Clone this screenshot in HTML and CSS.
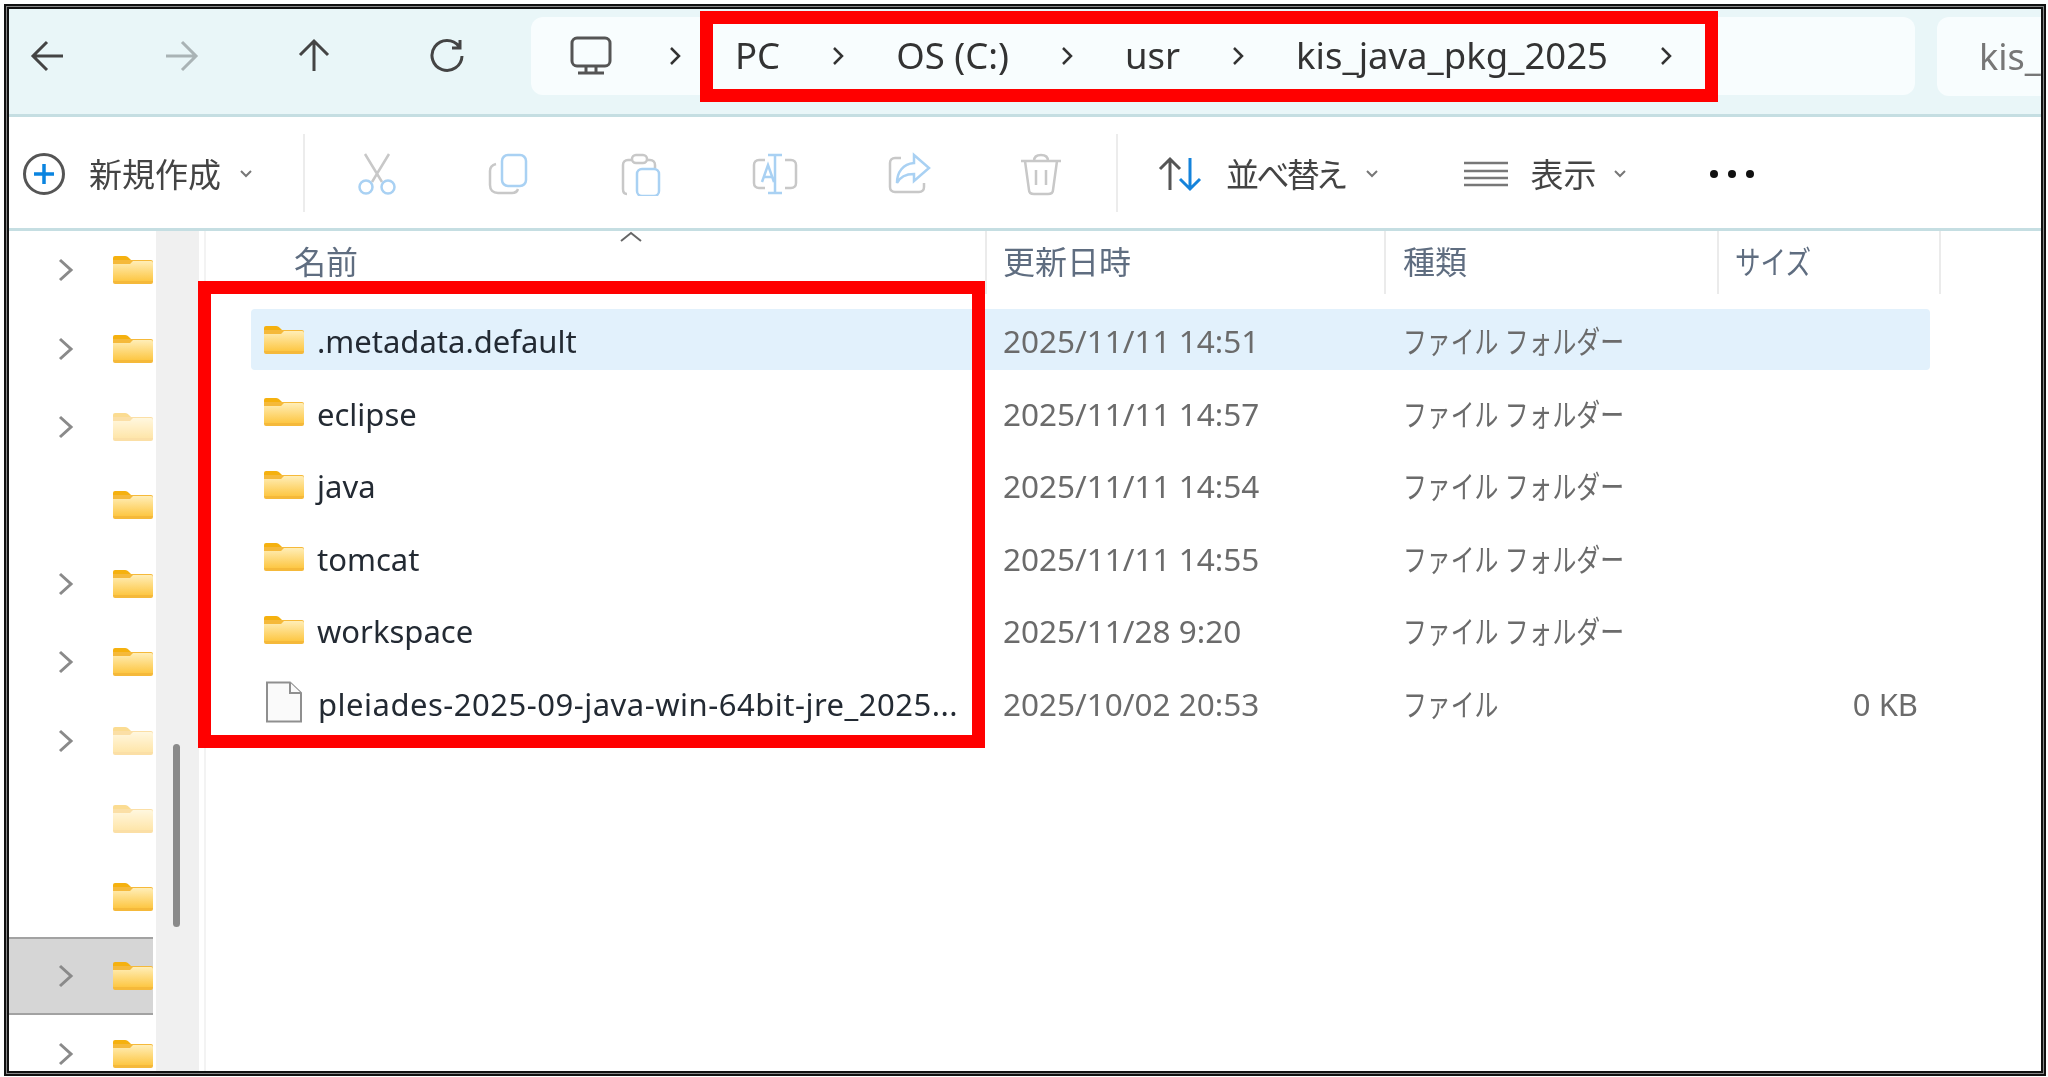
FILE: index.html
```html
<!DOCTYPE html>
<html lang="ja">
<head>
<meta charset="utf-8">
<title>kis_java_pkg_2025</title>
<link rel="stylesheet" href="styles.css">
</head>
<body>
<div class="window">
  <header class="navbar">
    <div class="nav-buttons">
      <svg class="nav-icon" viewBox="0 0 36 36"><path d="M33 18H4M17 4L3 18l14 14"/></svg>
      <svg class="nav-icon dim" viewBox="0 0 36 36"><path d="M3 18h29M19 4l14 14-14 14"/></svg>
      <svg class="nav-icon" viewBox="0 0 36 36"><path d="M18 33V4M4 17L18 3l14 14"/></svg>
      <svg class="nav-icon" viewBox="0 0 36 36"><path d="M30 8.5A15 15 0 1 0 33 18M31 2v8h-8"/></svg>
    </div>
    <div class="address">
      <svg class="pc-icon" viewBox="0 0 44 40"><rect x="3" y="2" width="38" height="28" rx="5"/><path d="M17 30v6M27 30v6M9 37h26"/></svg>
      <svg class="crumb-sep first" viewBox="0 0 14 20"><path d="M3 2l8 8-8 8"/></svg>
      <span class="crumb pc">PC</span>
      <svg class="crumb-sep" viewBox="0 0 14 20"><path d="M3 2l8 8-8 8"/></svg>
      <span class="crumb">OS (C:)</span>
      <svg class="crumb-sep" viewBox="0 0 14 20"><path d="M3 2l8 8-8 8"/></svg>
      <span class="crumb">usr</span>
      <svg class="crumb-sep" viewBox="0 0 14 20"><path d="M3 2l8 8-8 8"/></svg>
      <span class="crumb">kis_java_pkg_2025</span>
      <svg class="crumb-sep" viewBox="0 0 14 20"><path d="M3 2l8 8-8 8"/></svg>
    </div>
    <div class="search"><span>kis_</span></div>
  </header>

  <nav class="toolbar">
    <div class="tool-new">
      <svg class="plus" viewBox="0 0 44 44"><circle cx="22" cy="22" r="19.5"/><path class="blue" d="M22 12v20M12 22h20"/></svg>
      <span class="tool-label">新規作成</span>
      <svg class="caret" viewBox="0 0 14 10"><path d="M2 2l5 5 5-5"/></svg>
    </div>
    <div class="divider"></div>
    <div class="actions">
      <svg class="action" viewBox="0 0 44 44"><path class="grey" d="M10 2l17 28M34 2L17 30"/><circle class="lblue" cx="11" cy="35" r="6.5"/><circle class="lblue" cx="33" cy="35" r="6.5"/></svg>
      <svg class="action" viewBox="0 0 44 44"><path class="grey" d="M9 12c-4 1-6 3-6 7v14c0 5 3 8 8 8h14c3 0 5-1 6-4"/><rect class="lblue" x="15" y="3" width="24" height="31" rx="6"/></svg>
      <svg class="action" viewBox="0 0 44 44"><path class="grey" d="M28 8h3c3 0 5 2 5 5v3M8 42c-3 0-4-2-4-5V13c0-3 2-5 5-5h4"/><rect class="grey" x="13" y="3" width="15" height="8" rx="4"/><rect class="lblue" x="18" y="17" width="22" height="27" rx="5"/></svg>
      <svg class="action wide" viewBox="0 0 48 44"><path class="grey" d="M14 8H8c-3 0-5 2-5 5v18c0 3 2 5 5 5h6M34 8h6c3 0 5 2 5 5v18c0 3-2 5-5 5h-6"/><path class="lblue" d="M24 3v38M17 3h14M17 41h14M11 30l6-17 6 17M13 25h8"/></svg>
      <svg class="action" viewBox="0 0 44 44"><path class="grey" d="M14 6H8c-3 0-5 2-5 5v24c0 3 2 5 5 5h24c3 0 5-2 5-5v-4"/><path class="lblue" d="M27 3l15 13-15 13v-7c-9 0-14 3-17 9 0-11 6-19 17-20z"/></svg>
      <svg class="action" viewBox="0 0 44 44"><path class="grey" d="M2 9h40M6 9l4 29c0 3 2 4 5 4h14c3 0 5-1 5-4l4-29M15 9c0-4 3-6 7-6s7 2 7 6M17 18v15M27 18v15"/></svg>
    </div>
    <div class="divider second"></div>
    <div class="tool-sort">
      <svg class="sort-icon" viewBox="0 0 48 36"><path class="dark" d="M14 34V3M4 13L14 3l10 10"/><path class="blue" d="M34 2v31M24 23l10 10 10-10"/></svg>
      <span class="tool-label">並べ替え</span>
      <svg class="caret" viewBox="0 0 14 10"><path d="M2 2l5 5 5-5"/></svg>
    </div>
    <div class="tool-view">
      <svg class="view-icon" viewBox="0 0 46 28"><path d="M1 3h44M1 11h44M1 18h44M1 25h44"/></svg>
      <span class="tool-label">表示</span>
      <svg class="caret" viewBox="0 0 14 10"><path d="M2 2l5 5 5-5"/></svg>
    </div>
    <div class="more"><i></i><i></i><i></i></div>
  </nav>

  <div class="main">
    <aside class="tree">
      <div class="tree-rows">
        <div class="tree-row"><svg class="chev" viewBox="0 0 16 24"><path d="M2 2l11 10L2 22"/></svg><svg class="folder"><use href="#folder"/></svg></div>
        <div class="tree-row"><svg class="chev" viewBox="0 0 16 24"><path d="M2 2l11 10L2 22"/></svg><svg class="folder"><use href="#folder"/></svg></div>
        <div class="tree-row"><svg class="chev" viewBox="0 0 16 24"><path d="M2 2l11 10L2 22"/></svg><svg class="folder faded"><use href="#folder"/></svg></div>
        <div class="tree-row no-chev"><svg class="folder"><use href="#folder"/></svg></div>
        <div class="tree-row"><svg class="chev" viewBox="0 0 16 24"><path d="M2 2l11 10L2 22"/></svg><svg class="folder"><use href="#folder"/></svg></div>
        <div class="tree-row"><svg class="chev" viewBox="0 0 16 24"><path d="M2 2l11 10L2 22"/></svg><svg class="folder"><use href="#folder"/></svg></div>
        <div class="tree-row"><svg class="chev" viewBox="0 0 16 24"><path d="M2 2l11 10L2 22"/></svg><svg class="folder faded"><use href="#folder"/></svg></div>
        <div class="tree-row no-chev"><svg class="folder faded"><use href="#folder"/></svg></div>
        <div class="tree-row no-chev"><svg class="folder"><use href="#folder"/></svg></div>
        <div class="tree-row selected"><svg class="chev" viewBox="0 0 16 24"><path d="M2 2l11 10L2 22"/></svg><svg class="folder"><use href="#folder"/></svg></div>
        <div class="tree-row"><svg class="chev" viewBox="0 0 16 24"><path d="M2 2l11 10L2 22"/></svg><svg class="folder"><use href="#folder"/></svg></div>
      </div>
      <div class="scrolltrack"><div class="thumb"></div></div>
    </aside>
    <section class="list">
      <div class="list-head">
        <div class="col col-name">名前<svg class="sort-caret" viewBox="0 0 24 12"><path d="M2 10l10-8 10 8"/></svg></div>
        <div class="col col-date">更新日時</div>
        <div class="col col-type">種類</div>
        <div class="col col-size"><span class="narrow">サイズ</span></div>
      </div>
      <div class="rows">
        <div class="row active"><div class="cell-name"><svg class="folder"><use href="#folder"/></svg>.metadata.default</div><div class="cell-date">2025/11/11 14:51</div><div class="cell-type"><span class="narrow">ファイル フォルダー</span></div><div class="cell-size"></div></div>
        <div class="row"><div class="cell-name"><svg class="folder"><use href="#folder"/></svg>eclipse</div><div class="cell-date">2025/11/11 14:57</div><div class="cell-type"><span class="narrow">ファイル フォルダー</span></div><div class="cell-size"></div></div>
        <div class="row"><div class="cell-name"><svg class="folder"><use href="#folder"/></svg>java</div><div class="cell-date">2025/11/11 14:54</div><div class="cell-type"><span class="narrow">ファイル フォルダー</span></div><div class="cell-size"></div></div>
        <div class="row"><div class="cell-name"><svg class="folder"><use href="#folder"/></svg>tomcat</div><div class="cell-date">2025/11/11 14:55</div><div class="cell-type"><span class="narrow">ファイル フォルダー</span></div><div class="cell-size"></div></div>
        <div class="row"><div class="cell-name"><svg class="folder"><use href="#folder"/></svg>workspace</div><div class="cell-date">2025/11/28 9:20</div><div class="cell-type"><span class="narrow">ファイル フォルダー</span></div><div class="cell-size"></div></div>
        <div class="row"><div class="cell-name long"><svg class="file" viewBox="0 0 38 42"><path d="M2 1.5h23L36 12v28.500H2z"/><path d="M25 1.500V12h11"/></svg>pleiades-2025-09-java-win-64bit-jre_2025...</div><div class="cell-date">2025/10/02 20:53</div><div class="cell-type"><span class="narrow">ファイル</span></div><div class="cell-size">0 KB</div></div>
      </div>
    </section>
  </div>

  <div class="mark mark-path"></div>
  <div class="mark mark-files"></div>
</div>

<svg class="defs" width="0" height="0" aria-hidden="true">
  <defs>
    <linearGradient id="fg" x1="0" y1="0" x2="0" y2="1"><stop offset="0" stop-color="#ffeeb8"/><stop offset="1" stop-color="#fdc744"/></linearGradient>
    <symbol id="folder" viewBox="0 0 40 28">
      <path d="M0 2a2 2 0 0 1 2-2h10c2 0 3 1 5 3l1 1h-18z" fill="#f5b10f"/>
      <path d="M0 4h38a2 2 0 0 1 2 2v20a2 2 0 0 1-2 2H2a2 2 0 0 1-2-2z" fill="#f5b93a"/>
      <path d="M0 8h17l3-3h18a2 2 0 0 1 2 2v18H0z" fill="url(#fg)"/>
    </symbol>
  </defs>
</svg>
</body>
</html>
```

FILE: styles.css
```css
* { box-sizing: border-box; }
html, body { margin: 0; height: 100%; background: #fff; overflow: hidden; }
body { padding: 4px 2px 1px 4px; font-family: "Noto Sans", "Noto Sans CJK JP", sans-serif; }
.defs { position: absolute; }

.window {
  position: relative;
  width: 2042px;
  height: 1072px;
  border: 5px solid #111;
  outline: 1px solid #888;
  outline-offset: -3px;
  background: #fff;
  display: flex;
  flex-direction: column;
  overflow: hidden;
}
.navbar, .toolbar, .main { filter: blur(.5px); }

/* nav bar */
.navbar {
  height: 108px;
  flex: none;
  background: #e9f6f8;
  border-bottom: 3px solid #c5dee2;
  display: flex;
  align-items: flex-start;
  padding-top: 8px;
}
.nav-buttons {
  width: 522px;
  flex: none;
  height: 78px;
  display: flex;
  align-items: center;
  gap: 97px;
  padding-left: 21px;
}
.nav-icon { width: 36px; height: 36px; fill: none; stroke: #444; stroke-width: 3; }
.nav-icon.dim { stroke: #a9b3b5; }
.address {
  width: 1384px;
  flex: none;
  height: 78px;
  background: #f8fdfe;
  border-radius: 12px;
  display: flex;
  align-items: center;
  padding-left: 38px;
  color: #333;
  font-size: 36.500px;
}
.pc-icon { width: 44px; height: 40px; fill: none; stroke: #555; stroke-width: 3; flex: none; margin-right: 55px; }
.crumb-sep { width: 14px; height: 20px; fill: none; stroke: #333; stroke-width: 2.500; flex: none; margin: 0 51px; }
.crumb-sep.first { margin: 0; }
.crumb.pc { margin-left: 53px; }
.crumb { white-space: nowrap; padding-bottom: 2px; }
.search {
  margin-left: 22px;
  flex: 1;
  height: 79px;
  background: #f8fdfe;
  border-radius: 12px 0 0 12px;
  display: flex;
  align-items: center;
  padding-left: 42px;
  font-size: 36px;
  color: #777;
  overflow: hidden;
}

/* toolbar */
.toolbar {
  height: 114px;
  flex: none;
  border-bottom: 3px solid #c5dee2;
  display: flex;
  align-items: center;
  color: #444;
  padding-top: 3px;
}
.tool-label { font-size: 33px; white-space: nowrap; font-feature-settings: "palt"; margin-top: -2px; }
.tool-sort .tool-label { letter-spacing: -3px; }
.caret { width: 14px; height: 10px; fill: none; stroke: #777; stroke-width: 2; flex: none; }
.tool-new { display: flex; align-items: center; padding-left: 13px; width: 294px; flex: none; }
.plus { width: 44px; height: 44px; fill: none; stroke: #555; stroke-width: 3; flex: none; margin-right: 23px; }
.plus .blue { stroke: #0a84e0; stroke-width: 3.500; }
.tool-new .caret { margin-left: 18px; }
.divider { width: 2px; height: 78px; background: #ececec; flex: none; margin-top: -3px; }
.actions { display: flex; align-items: center; flex: none; gap: 89px; padding-left: 50px; width: 811px; }
.action { width: 44px; height: 44px; fill: none; stroke-width: 2.500; flex: none; margin-right: -1px; }
.action.wide { width: 48px; }
.grey { stroke: #c8c8c8; }
.lblue { stroke: #a9d1f3; }
.dark { stroke: #555; stroke-width: 3; }
.blue { stroke: #1583db; stroke-width: 3; }
.tool-sort { display: flex; align-items: center; margin-left: 38px; }
.sort-icon { width: 48px; height: 36px; fill: none; flex: none; margin-right: 22px; }
.tool-sort .caret { margin-left: 21px; }
.tool-view { display: flex; align-items: center; margin-left: 84px; }
.view-icon { width: 46px; height: 28px; fill: none; stroke: #777; stroke-width: 2.500; flex: none; margin-right: 22px; }
.tool-view .caret { margin-left: 16px; }
.more { display: flex; gap: 10px; margin-left: 83px; }
.more i { width: 8px; height: 8px; border-radius: 50%; background: #111; }

/* main */
.main { flex: 1; display: flex; min-height: 0; }
.tree {
  width: 197px;
  flex: none;
  display: flex;
  position: relative;
  border-right: 2px solid #f3f3f3;
}
.tree-rows { width: 144px; flex: none; }
.tree-row { height: 78.400px; display: flex; align-items: center; padding-left: 49px; }
.tree-row.no-chev { padding-left: 104px; }
.tree-row.selected { background: #d6d6d6; border-top: 2px solid #a2a2a2; border-bottom: 2px solid #a2a2a2; }
.chev { width: 16px; height: 24px; fill: none; stroke: #8a8a8a; stroke-width: 3; flex: none; margin-right: 39px; }
.folder { width: 40px; height: 28px; flex: none; }
.folder.faded { opacity: .45; }
.scrolltrack { width: 43px; margin-left: 3px; background: #f0f0f0; position: relative; }
.thumb { position: absolute; left: 17px; top: 513px; width: 7px; height: 183px; border-radius: 4px; background: #8a8a8a; }

.list { flex: 1; min-width: 0; }
.list-head { height: 63px; display: flex; color: #5f6d80; font-size: 32px; }
.col { height: 100%; border-right: 2px solid #ebebeb; padding-top: 6px; position: relative; }
.col-name { width: 781px; padding-left: 88px; }
.col-date { width: 399px; padding-left: 16px; }
.col-type { width: 333px; padding-left: 17px; }
.col-size { width: 222px; padding-left: 16px; }
.sort-caret { position: absolute; left: 413px; top: 0; width: 24px; height: 12px; fill: none; stroke: #666; stroke-width: 2; }
.narrow { display: inline-block; transform: scaleX(.8); transform-origin: left center; white-space: nowrap; }
.rows { padding: 15px 0 0 45px; }
.row { height: 61px; margin-bottom: 11.600px; display: flex; align-items: center; width: 1679px; border-radius: 4px; font-size: 31px; white-space: nowrap; }
.row.active { background: #e2f1fc; }
.cell-name { width: 752px; flex: none; display: flex; align-items: center; color: #232a33; padding: 3px 0 0 13px; }
.cell-name.long { letter-spacing: .5px; }
.cell-name .folder { margin: -3px 13px 0 0; }
.file { width: 38px; height: 42px; fill: #fafafa; stroke: #8f8f8f; stroke-width: 2; flex: none; margin: -3px 15px 0 1px; }
.cell-date { width: 400px; flex: none; color: #6b6b6b; font-size: 31.500px; padding-top: 2px; }
.cell-type { width: 333px; flex: none; color: #6b6b6b; }
.cell-type .narrow { transform: scaleX(.77); }
.cell-size { flex: 1; text-align: right; color: #6b6b6b; padding: 3px 12px 0 0; }

/* red annotation frames */
.mark { position: absolute; border: 13px solid #ff0000; }
.mark-path { left: 691px; top: 2px; width: 1018px; height: 91px; }
.mark-files { left: 189px; top: 272px; width: 787px; height: 467px; }
```
